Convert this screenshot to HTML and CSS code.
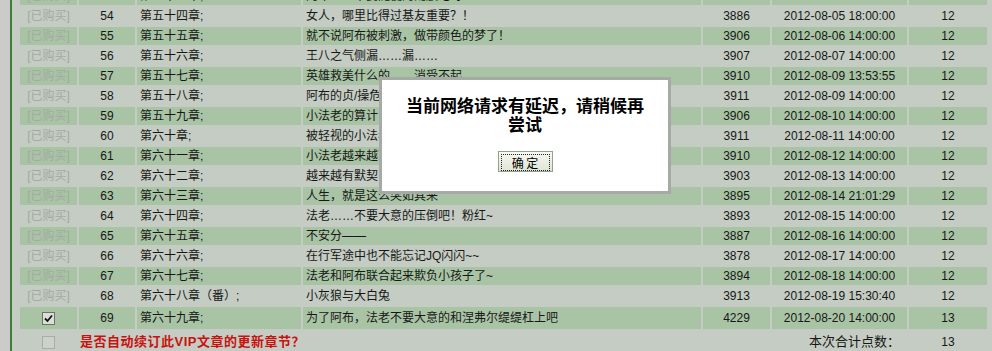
FILE: index.html
```html
<!DOCTYPE html>
<html lang="zh-CN">
<head>
  <meta charset="UTF-8">
  <title>VIP章节订阅</title>
  <link rel="stylesheet" href="styles.css">
</head>
<body>
  <div class="wrap">
    <table class="chapters">
      <colgroup>
        <col class="c-buy"><col class="c-no"><col class="c-chap"><col class="c-title">
        <col class="c-words"><col class="c-time"><col class="c-price">
      </colgroup>
      <tr class="odd">
        <td class="bought">[已购买]</td><td class="num">53</td><td class="txt">第五十三章;</td>
        <td class="txt">阿布……不要随便的乱放电呀</td><td class="num">3902</td>
        <td class="num">2012-08-04 14:00:00</td><td class="num">12</td>
      </tr>
      <tr>
        <td class="bought">[已购买]</td><td class="num">54</td><td class="txt">第五十四章;</td>
        <td class="txt">女人，哪里比得过基友重要？！</td><td class="num">3886</td>
        <td class="num">2012-08-05 18:00:00</td><td class="num">12</td>
      </tr>
      <tr class="odd">
        <td class="bought">[已购买]</td><td class="num">55</td><td class="txt">第五十五章;</td>
        <td class="txt">就不说阿布被刺激，做带颜色的梦了！</td><td class="num">3906</td>
        <td class="num">2012-08-06 14:00:00</td><td class="num">12</td>
      </tr>
      <tr>
        <td class="bought">[已购买]</td><td class="num">56</td><td class="txt">第五十六章;</td>
        <td class="txt">王八之气侧漏……漏……</td><td class="num">3907</td>
        <td class="num">2012-08-07 14:00:00</td><td class="num">12</td>
      </tr>
      <tr class="odd">
        <td class="bought">[已购买]</td><td class="num">57</td><td class="txt">第五十七章;</td>
        <td class="txt">英雄救美什么的……消受不起</td><td class="num">3910</td>
        <td class="num">2012-08-09 13:53:55</td><td class="num">12</td>
      </tr>
      <tr>
        <td class="bought">[已购买]</td><td class="num">58</td><td class="txt">第五十八章;</td>
        <td class="txt">阿布的贞/操危机</td><td class="num">3911</td>
        <td class="num">2012-08-09 14:00:00</td><td class="num">12</td>
      </tr>
      <tr class="odd">
        <td class="bought">[已购买]</td><td class="num">59</td><td class="txt">第五十九章;</td>
        <td class="txt">小法老的算计</td><td class="num">3906</td>
        <td class="num">2012-08-10 14:00:00</td><td class="num">12</td>
      </tr>
      <tr>
        <td class="bought">[已购买]</td><td class="num">60</td><td class="txt">第六十章;</td>
        <td class="txt">被轻视的小法老</td><td class="num">3911</td>
        <td class="num">2012-08-11 14:00:00</td><td class="num">12</td>
      </tr>
      <tr class="odd">
        <td class="bought">[已购买]</td><td class="num">61</td><td class="txt">第六十一章;</td>
        <td class="txt">小法老越来越可爱了</td><td class="num">3910</td>
        <td class="num">2012-08-12 14:00:00</td><td class="num">12</td>
      </tr>
      <tr>
        <td class="bought">[已购买]</td><td class="num">62</td><td class="txt">第六十二章;</td>
        <td class="txt">越来越有默契了</td><td class="num">3903</td>
        <td class="num">2012-08-13 14:00:00</td><td class="num">12</td>
      </tr>
      <tr class="odd">
        <td class="bought">[已购买]</td><td class="num">63</td><td class="txt">第六十三章;</td>
        <td class="txt">人生，就是这么突如其来</td><td class="num">3895</td>
        <td class="num">2012-08-14 21:01:29</td><td class="num">12</td>
      </tr>
      <tr>
        <td class="bought">[已购买]</td><td class="num">64</td><td class="txt">第六十四章;</td>
        <td class="txt">法老……不要大意的压倒吧！粉红~</td><td class="num">3893</td>
        <td class="num">2012-08-15 14:00:00</td><td class="num">12</td>
      </tr>
      <tr class="odd">
        <td class="bought">[已购买]</td><td class="num">65</td><td class="txt">第六十五章;</td>
        <td class="txt">不安分——</td><td class="num">3887</td>
        <td class="num">2012-08-16 14:00:00</td><td class="num">12</td>
      </tr>
      <tr>
        <td class="bought">[已购买]</td><td class="num">66</td><td class="txt">第六十六章;</td>
        <td class="txt">在行军途中也不能忘记JQ闪闪~~</td><td class="num">3878</td>
        <td class="num">2012-08-17 14:00:00</td><td class="num">12</td>
      </tr>
      <tr class="odd">
        <td class="bought">[已购买]</td><td class="num">67</td><td class="txt">第六十七章;</td>
        <td class="txt">法老和阿布联合起来欺负小孩子了~</td><td class="num">3894</td>
        <td class="num">2012-08-18 14:00:00</td><td class="num">12</td>
      </tr>
      <tr>
        <td class="bought">[已购买]</td><td class="num">68</td><td class="txt">第六十八章（番）;</td>
        <td class="txt">小灰狼与大白兔</td><td class="num">3913</td>
        <td class="num">2012-08-19 15:30:40</td><td class="num">12</td>
      </tr>
      <tr class="odd tall">
        <td><span class="check on"><svg viewBox="0 0 9 9" width="9" height="9"><path d="M1 4.5 L3.5 7 L8 1.5" fill="none" stroke="#111" stroke-width="1.8"/></svg></span></td>
        <td class="num">69</td><td class="txt">第六十九章;</td>
        <td class="txt">为了阿布，法老不要大意的和涅弗尔缇缇杠上吧</td><td class="num">4229</td>
        <td class="num">2012-08-20 14:00:00</td><td class="num">13</td>
      </tr>
      <tr class="total">
        <td><span class="check off"></span></td>
        <td class="renew" colspan="3">是否自动续订此VIP文章的更新章节？</td>
        <td class="sum" colspan="2">本次合计点数：</td>
        <td class="num">13</td>
      </tr>
    </table>
  </div>

  <div class="dialog">
    <p class="dialog-msg">当前网络请求有延迟，请稍候再尝试</p>
    <button class="dialog-btn" type="button"><span>确 定</span></button>
  </div>
</body>
</html>
```

FILE: styles.css
```css
body {
  margin: 0;
  background: #cbccca;
  font-family: "Liberation Sans", "Noto Sans CJK SC", sans-serif;
  font-size: 12px;
  color: #161816;
  overflow: hidden;
}

.wrap {
  margin-left: 10px;
  border-left: 2px solid #3f7d3d;
  padding-left: 6px;
  background: #c5ccc3;
  min-height: 351px;
}

.chapters {
  margin-top: -15px;
  border-collapse: separate;
  border-spacing: 2px;
  table-layout: fixed;
  width: 971px;
}

.c-buy { width: 57px; }
.c-no { width: 56px; }
.c-chap { width: 164px; }
.c-title { width: 398px; }
.c-words { width: 67px; }
.c-time { width: 135px; }
.c-price { width: 78px; }

.chapters td {
  padding: 0;
  height: 18px;
  line-height: 18px;
  white-space: nowrap;
  overflow: hidden;
}

.chapters tr.odd td {
  background: #a9c4a5;
}

.chapters tr.tall td,
.chapters tr.total td {
  height: 22px;
}

.num, .bought {
  text-align: center;
}

.bought {
  color: #a1aba0;
}

.txt {
  text-indent: 3px;
}

.check {
  display: block;
  width: 11px;
  height: 11px;
  margin: 0 auto;
  line-height: 0;
  text-align: center;
}

.check svg {
  margin-top: 1px;
}

.check.on {
  border: 1px solid #6c7369;
  background: #dadfd8;
}

.check.off {
  border: 1px solid #a8ada6;
  background: #ccd1ca;
}

.renew {
  color: #c8120f;
  font-weight: bold;
  font-size: 13px;
  letter-spacing: 0.5px;
  text-indent: 1px;
}

.chapters td.sum {
  text-align: right;
  padding-right: 7px;
  font-size: 13px;
}

/* message box over the list */
.dialog {
  position: absolute;
  left: 379px;
  top: 77px;
  width: 286px;
  height: 111px;
  border: 3px solid #a6aaa5;
  background: #fff;
  text-align: center;
}

.dialog-msg {
  margin: 15px 22px 0;
  font-family: "Noto Sans CJK SC", sans-serif;
  font-size: 17px;
  font-weight: bold;
  line-height: 19px;
  color: #000;
}

.dialog-btn {
  margin-top: 18px;
  width: 55px;
  height: 21px;
  padding: 2px;
  border: 1px solid #8fa28b;
  background: linear-gradient(#f7f8f2, #dfe5d6);
  font-family: "Noto Sans CJK SC", sans-serif;
  font-size: 12px;
  color: #000;
}

.dialog-btn span {
  display: block;
  height: 15px;
  line-height: 15px;
  border: 1px dotted #222;
}
```
